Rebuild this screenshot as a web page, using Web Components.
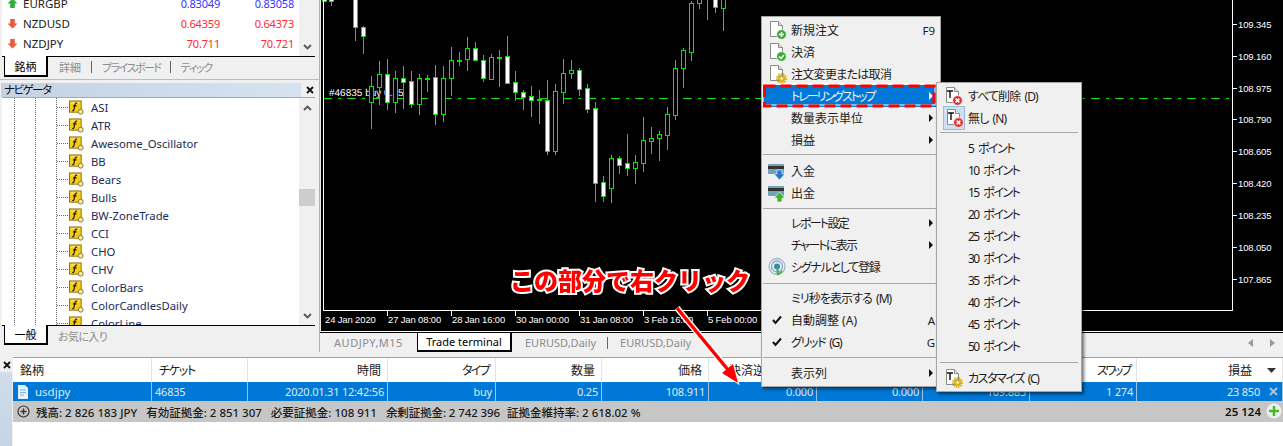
<!DOCTYPE html>
<html lang="ja"><head><meta charset="utf-8"><title>MT4</title>
<style>html,body{margin:0;padding:0;width:1283px;height:446px;overflow:hidden;background:#f0f0f0}</style>
</head><body>
<mt-app></mt-app>
<script>
const FONT='"Noto Sans","Noto Sans CJK JP",sans-serif';
const doc=(inner,t)=>`<svg width="20" height="20" viewBox="0 0 20 20"><path d="M3.5 1.5h8l4 4v11h-12z" fill="#fff" stroke="#8a8a8a"/><path d="M11.5 1.5v4h4" fill="#e4e4e4" stroke="#8a8a8a"/>${t?'<path d="M4 5h6M7 5v7" stroke="#111" stroke-width="1.4" fill="none"/>':''}${inner}</svg>`;
const badge=(c,m)=>`<circle cx="14.5" cy="14.5" r="4.8" fill="${c}" stroke="#fff" stroke-width=".6"/>${m}`;
const gear=`<circle cx="14.5" cy="14.5" r="4.6" fill="none" stroke="#d8a800" stroke-width="1.6" stroke-dasharray="1.6 .9"/><circle cx="14.5" cy="14.5" r="3.2" fill="#e8bd20" stroke="#a88000" stroke-width=".6"/><circle cx="14.5" cy="14.5" r="1.2" fill="#fff6c0"/>`;
const plus=badge('#39a93a','<path d="M12 14.5h5M14.5 12v5" stroke="#fff" stroke-width="1.6"/>');
const chk=badge('#39a93a','<path d="M12.2 14.5l1.8 1.9 3-3.4" stroke="#fff" stroke-width="1.5" fill="none"/>');
const xx=badge('#dc2f2f','<path d="M12.6 12.6l3.8 3.8M16.4 12.6l-3.8 3.8" stroke="#fff" stroke-width="1.5"/>');
const card=(c,d)=>`<svg width="20" height="20" viewBox="0 0 20 20"><rect x="1" y="3" width="16" height="10" rx="1" fill="#6fa3b8"/><rect x="1" y="5" width="16" height="3" fill="#333"/><path d="${d}" fill="${c}" stroke="#fff" stroke-width=".6"/></svg>`;
const ICONS={
 'doc-plus':doc(plus),'doc-check':doc(chk),'doc-gear':doc(gear),
 'tdoc-x':doc(xx,1),'tdoc-gear':doc(gear,1),
 'card-in':card('#2477d6','M10 9h5v4h3l-5.5 6-5.5-6h3z'),
 'card-out':card('#3fb52e','M12.500 9l5.500 6h-3v4h-5v-4h-3z'),
 'signal':`<svg width="20" height="20" viewBox="0 0 20 20"><g fill="none" stroke-width="1.3"><circle cx="10" cy="9.500" r="8" stroke="#9fb6c8"/><circle cx="10" cy="9.500" r="5.500" stroke="#7fa6c8"/></g><circle cx="10" cy="9.500" r="3" fill="#2e86c8"/><path d="M9 9h2l1 9h-2z" fill="#3cae3c"/><path d="M15 14a8 8 0 0 1-5 3.500" stroke="#3cae3c" stroke-width="1.500" fill="none"/></svg>`,
 'check':`<svg width="14" height="14" viewBox="0 0 14 14"><path d="M3 7l2.500 3L11 3.500" stroke="#111" stroke-width="2" fill="none"/></svg>`,
 'fn':`<svg width="16" height="17" viewBox="0 0 16 17"><rect x=".5" y="1.500" width="12.500" height="12" fill="#f7cc14" stroke="#8f6f08"/><path d="M2 3h9.500v1.200H2z" fill="#fde98a"/><path d="M8.800 4c-1.300-.5-2.100.1-2.400 1.400L5.300 10.500c-.3 1.300-.9 1.700-1.900 1.300M4.200 6.800h3.800" stroke="#1a1a1a" stroke-width="1.300" fill="none"/><circle cx="12.500" cy="13" r="2.600" fill="#f8ea9a" stroke="#7f7430"/></svg>`,
 'up':`<svg width="11" height="11" viewBox="0 0 11 11"><path d="M5.500 .5L10.500 5.500H7.800V10H3.200V5.500H.5z" fill="#2fb02f"/></svg>`,
 'down':`<svg width="11" height="11" viewBox="0 0 11 11"><path d="M5.500 10.500L.5 5.500H3.200V1H7.800V5.500H10.500z" fill="#f0583a"/></svg>`,
 'chev-up':`<svg width="9" height="6" viewBox="0 0 9 6"><path d="M1 5l3.500-3.500L8 5" stroke="#555" stroke-width="1.800" fill="none"/></svg>`,
 'chev-down':`<svg width="9" height="6" viewBox="0 0 9 6"><path d="M1 1l3.500 3.500L8 1" stroke="#555" stroke-width="1.800" fill="none"/></svg>`,
 'close':`<svg width="8" height="8" viewBox="0 0 8 8"><path d="M1 1l6 6M7 1L1 7" stroke="#111" stroke-width="1.800"/></svg>`,
 'row':`<svg width="12" height="16" viewBox="0 0 12 16"><path d="M1 1h7l3 3v11H1z" fill="#e6f2fc"/><path d="M3 6h6M3 8.500h6M3 11h4" stroke="#7fb4e0"/></svg>`,
 'sum':`<svg width="13" height="13" viewBox="0 0 13 13"><circle cx="6.500" cy="6.500" r="5.500" fill="none" stroke="#333" stroke-width="1.200"/><path d="M3.500 6.500h6M6.500 3.500v6" stroke="#333" stroke-width="1.400"/></svg>`,
 'green-plus':`<svg width="16" height="16" viewBox="0 0 16 16"><circle cx="8" cy="8" r="7.500" fill="#eee"/><path d="M3 8h10M8 3v10" stroke="#45b82a" stroke-width="2.400"/></svg>`,
 'row-x':`<svg width="9" height="9" viewBox="0 0 9 9"><path d="M1 1l7 7M8 1L1 8" stroke="#b4c0cc" stroke-width="2"/></svg>`,
 'tri-down':`<svg width="9" height="5" viewBox="0 0 9 5"><path d="M0 0h9L4.500 5z" fill="#333"/></svg>`,
 'left':`<svg width="5" height="8" viewBox="0 0 5 8"><path d="M5 0v8L0 4z" fill="#999"/></svg>`,
 'right':`<svg width="5" height="8" viewBox="0 0 5 8"><path d="M0 0v8l5-4z" fill="#999"/></svg>`,
};
class Base extends HTMLElement{
 connectedCallback(){ if(this.shadowRoot) return; this.attachShadow({mode:'open'}).innerHTML=this.render(); }
}
const def=(n,f)=>customElements.define(n,class extends Base{render(){return f(this)}});

def('mt-icon',e=>`<style>:host{display:inline-flex;align-items:center;justify-content:center;flex:none;line-height:0}</style>${ICONS[e.getAttribute('name')]||''}`);

def('mt-tab',e=>`<style>
:host{display:flex;align-items:center;justify-content:center;box-sizing:border-box;white-space:nowrap;font-size:var(--tab-size,11px);font-feature-settings:"palt";color:#8c8c8c;padding:0 10px;height:100%;position:relative}
:host([active]){background:#fff;color:#000;border:solid #000;border-width:0 2px 2px 1px;margin-top:-1px;height:calc(100% + 1px)}
:host([sep])::after{content:"";position:absolute;right:0;top:4px;height:12px;width:1px;background:#666}
</style><slot></slot>`);

def('mt-tabstrip',e=>`<style>
:host{display:flex;box-sizing:border-box;border-top:1px solid #000;background:#f0f0f0;padding-left:var(--tab-left,2px);height:var(--tab-h,20px);margin-right:var(--tab-right,4px)}
</style><slot></slot>`);

def('mt-quote',e=>{const c=e.getAttribute('dir')==='up'?'#3535ff':'#ff2a2a';return `<style>
:host{display:grid;grid-template-columns:16px 1fr 42px 32px 42px;align-items:center;height:20px;padding-left:5px;padding-right:5px;font-size:11.500px;color:#222}
span.v{color:${c};text-align:right;font-size:11px;letter-spacing:-.2px}
mt-icon{justify-self:start}
</style><mt-icon name="${e.getAttribute('dir')}"></mt-icon><span>${e.getAttribute('sym')}</span><span class="v">${e.getAttribute('bid')}</span><span></span><span class="v">${e.getAttribute('ask')}</span>`});

def('mt-scrollbar',e=>`<style>
:host{display:flex;flex-direction:column;align-items:center;background:#f0f0f0;width:16px;flex:none;position:relative;box-sizing:border-box;padding:var(--sb-pad,6px 0 6px)}
.sp{flex:1}
.th{position:absolute;left:0;right:0;top:${e.getAttribute('thumb')||0}px;height:17px;background:#cdcdcd;display:${e.hasAttribute('thumb')?'block':'none'}}
</style>${e.hasAttribute('noup')?'':'<mt-icon name="chev-up"></mt-icon>'}<div class="sp"></div><div class="th"></div><mt-icon name="chev-down"></mt-icon>`);

def('mt-market-watch',e=>`<style>
:host{display:block;height:80px;box-sizing:border-box;border-bottom:1px solid #bcbcbc;padding-left:2px;--tab-right:4px}
.body{display:flex;height:56px;overflow:hidden;background:#fff;margin-right:4px}
.list{flex:1;margin-top:-7px}
mt-tabstrip{--tab-h:21px}
mt-tab.a{width:44px;padding:0}
.k{letter-spacing:-1.500px}
.k2{letter-spacing:-1.200px}
</style>
<div class="body"><div class="list">
<mt-quote dir="up" sym="EURGBP" bid="0.83049" ask="0.83058"></mt-quote>
<mt-quote dir="down" sym="NZDUSD" bid="0.64359" ask="0.64373"></mt-quote>
<mt-quote dir="down" sym="NZDJPY" bid="70.711" ask="70.721"></mt-quote>
</div><mt-scrollbar noup style="--sb-pad:0 0 6px"></mt-scrollbar></div>
<mt-tabstrip><mt-tab class="a" active>銘柄</mt-tab><mt-tab sep style="padding:0 11px">詳細</mt-tab><mt-tab sep class="k">プライスボード</mt-tab><mt-tab class="k2">ティック</mt-tab></mt-tabstrip>`);

def('mt-nav-row',e=>`<style>
:host{display:flex;align-items:center;height:18px;padding-left:67px;gap:7px;font-size:11.300px;color:#1a2c58;white-space:nowrap;
background:
 repeating-linear-gradient(to bottom,#666 0 1px,transparent 1px 2px) 12px 0/1px 100% no-repeat,
 repeating-linear-gradient(to bottom,#666 0 1px,transparent 1px 2px) 33px 0/1px 100% no-repeat,
 repeating-linear-gradient(to bottom,#666 0 1px,transparent 1px 2px) 54px 0/1px 100% no-repeat,
 repeating-linear-gradient(to right,#666 0 1px,transparent 1px 2px) 55px 9px/12px 1px no-repeat}
mt-icon{margin-top:1px;width:15px}
</style><mt-icon name="fn"></mt-icon><span><slot></slot></span>`);

def('mt-navigator',e=>`<style>
:host{display:flex;flex-direction:column;height:272px;padding-top:3px;box-sizing:border-box;padding-left:1px}
.title{display:flex;align-items:center;height:14px;margin-right:0;flex:none}
.cap{flex:1;height:14px;line-height:14px;background:linear-gradient(to right,#c3d3e4,#d6e2f0);font-size:11.500px;font-feature-settings:"palt";letter-spacing:-1.500px;padding-left:3px;color:#111}
.x{width:18px;display:flex;justify-content:center}
.body{display:flex;flex:none;height:228px;background:#fff;border-top:1px solid #a8a8a8;margin-left:1px;margin-right:4px;overflow:hidden;box-sizing:border-box}
.tree{flex:1;overflow:hidden}
mt-scrollbar{--sb-pad:7px 0 6px}
mt-tabstrip{--tab-h:20px;margin-left:1px;flex:none}
mt-tab.a{width:44px;padding:0}
mt-tab.b{letter-spacing:-.6px}
</style>
<div class="title"><div class="cap">ナビゲータ</div><div class="x"><mt-icon name="close"></mt-icon></div></div>
<div class="body"><div class="tree">
${['ASI','ATR','Awesome_Oscillator','BB','Bears','Bulls','BW-ZoneTrade','CCI','CHO','CHV','ColorBars','ColorCandlesDaily','ColorLine'].map(t=>`<mt-nav-row>${t}</mt-nav-row>`).join('')}
</div><mt-scrollbar thumb="91"></mt-scrollbar></div>
<mt-tabstrip><mt-tab class="a" active>一般</mt-tab><mt-tab class="b">お気に入り</mt-tab></mt-tabstrip>`);

const C=[[324,-5,1,-5,1,'w'],[331,-5,6,-5,1,'w'],[355,-5,41,-5,27,'w'],[363,26,54,27,36,'w'],[371,76,129,86,102,'h'],[379,61,105,74,87,'h'],[387,59,110,74,102,'w'],[395,71,113,78,102,'h'],[403,66,109,78,82,'w'],[411,71,108,81,104,'w'],[419,74,115,78,104,'h'],[427,75,92,78,78,'d'],[435,65,125,77,114,'w'],[443,66,122,78,114,'h'],[451,47,96,60,78,'h'],[459,52,66,60,60,'d'],[467,37,71,48,59,'h'],[475,42,60,48,60,'w'],[483,55,82,60,78,'w'],[491,54,79,57,79,'h'],[499,50,87,57,57,'d'],[507,36,84,56,83,'w'],[515,71,101,82,92,'w'],[523,90,110,92,97,'w'],[531,86,117,96,100,'w'],[539,90,124,99,99,'d'],[547,80,155,100,151,'w'],[555,84,155,91,151,'h'],[563,59,104,73,92,'h'],[571,60,79,70,73,'h'],[579,68,96,70,89,'w'],[587,84,113,88,109,'w'],[595,102,202,108,183,'w'],[603,176,202,182,196,'w'],[611,155,203,158,188,'h'],[619,156,174,158,165,'w'],[627,134,176,163,168,'w'],[635,155,184,162,168,'h'],[643,117,172,140,163,'h'],[651,127,154,138,141,'h'],[659,131,161,134,138,'h'],[667,107,150,114,135,'h'],[675,60,120,68,115,'h'],[683,48,88,50,68,'h'],[691,1,61,3,52,'h'],[699,-5,9,-5,3,'h'],[707,-5,20,-5,-3,'d'],[715,-5,13,-5,7,'w'],[723,-5,31,-5,8,'h']];
const G='#0be00b';
const candles=C.map(([x,wt,wb,bt,bb,k])=>{
 let s=`<rect x="${x}" y="${wt}" width="1" height="${wb-wt}" fill="${G}"/>`;
 if(k==='d') s+=`<rect x="${x-2}" y="${bt}" width="5" height="2" fill="${G}"/>`;
 else s+=`<rect x="${x-1.5}" y="${bt+.5}" width="4" height="${bb-bt}" fill="${k==='w'?'#fff':'#000'}" stroke="${G}"/>`;
 return s}).join('');
const Y=[['109.345',24],['109.160',56],['108.975',88],['108.790',119],['108.605',151],['108.420',183],['108.235',215],['108.050',247],['107.865',279]];
const X=[['24 Jan 2020',324,0],['27 Jan 08:00',387,387],['28 Jan 16:00',451,451],['30 Jan 00:00',515,515],['31 Jan 08:00',579,579],['3 Feb 16:00',643,643],['5 Feb 00:00',707,707]];

def('mt-chart',e=>`<style>
:host{display:flex;flex-direction:column;height:352px;min-width:0}
svg{display:block;flex:none}
text{font-family:"Liberation Sans",sans-serif;font-size:9.500px;letter-spacing:-.15px;fill:#fff}
mt-tabstrip{--tab-h:19px;--tab-left:0;--tab-right:0;--tab-size:11px;border-top:none;flex:none;position:relative}
mt-tab.off{padding:0 12px}
mt-tab.act{width:95px;padding:0;border-top:1px solid #000;margin-left:0}
.arrows{position:absolute;right:8px;top:0;height:100%;display:flex;align-items:center;gap:17px}
.first{width:97px;padding:0;letter-spacing:.5px}
mt-tab.e1{padding:0 12px 0 13px}
</style>
<svg width="963" height="333" viewBox="320 0 963 333" shape-rendering="crispEdges">
<rect x="320" y="0" width="963" height="333" fill="#000"/>
<rect x="320" y="0" width="1" height="331" fill="#e8e8e8"/>
<line x1="324" x2="1232" y1="98.500" y2="98.500" stroke="${G}" stroke-dasharray="9 6 3 6" stroke-dashoffset="-23"/>
<text x="329" y="96" text-rendering="geometricPrecision" style="font-size:10px;letter-spacing:0">#46835 buy 0.25</text>
${candles}
<rect x="323" y="0" width="1" height="311" fill="#fff"/>
<rect x="323" y="310" width="910" height="1" fill="#fff"/>
<rect x="1232" y="0" width="1" height="311" fill="#fff"/>
${Y.map(([t,y])=>`<rect x="1233" y="${y}" width="4" height="1" fill="#fff"/><text x="1238" y="${y+4}">${t}</text>`).join('')}
${X.map(([t,x,k])=>`${k?`<rect x="${k}" y="311" width="1" height="5" fill="#fff"/>`:''}<text x="${x+1}" y="323">${t}</text>`).join('')}
<rect x="320" y="331" width="963" height="1" fill="#fff"/>
</svg>
<mt-tabstrip>
<mt-tab class="off first">AUDJPY,M15</mt-tab><mt-tab class="act" active>Trade terminal</mt-tab>
<mt-tab class="off e1" sep>EURUSD,Daily</mt-tab><mt-tab class="off">EURUSD,Daily</mt-tab>
<div class="arrows"><mt-icon name="left"></mt-icon><mt-icon name="right"></mt-icon></div>
</mt-tabstrip>`);

const COLS='139px 96px 140px 108px 106px 107px 108px 106px 107px 107px 146px';
def('mt-terminal',e=>{
 const H=[['銘柄','l'],['チケット','l','letter-spacing:-1.200px'],['時間',''],['タイプ','','letter-spacing:-1.700px'],['数量',''],['価格',''],['決済逆指値','','padding-right:27px'],['',''],['',''],['スワップ','','letter-spacing:-2.200px'],['損益','','padding-right:30px']];
 const R=[['usdjpy','l'],['46835','l'],['2020.01.31 12:42:56',''],['buy',''],['0.25',''],['108.911',''],['0.000',''],['0.000',''],['109.885',''],['1 274',''],['23 850','','padding-right:22px']];
 return `<style>
:host{display:grid;grid-template-columns:13px 1fr;height:94px;background:#f0f0f0;padding-top:5px;box-sizing:border-box;font-size:11.500px}
.strip{display:flex;flex-direction:column;align-items:center;margin-top:1px}
.strip .x{height:13px;display:flex;align-items:center}
.strip .b{flex:1;align-self:stretch;background:linear-gradient(to bottom,#f0f0f0 0,#cfdcea 2px,#c5d5e6);margin-right:1px;margin-top:0}
.main{background:#fff;display:flex;flex-direction:column;border-top:1px solid #a0a0a0;min-width:0}
.g{display:grid;grid-template-columns:${COLS};position:relative}
.hd{height:24px;font-size:12px;font-feature-settings:"palt";color:#222}
.hd div{display:flex;align-items:center;justify-content:flex-end;padding-right:6px;border-right:1px solid #e4e4e4;box-sizing:border-box;white-space:nowrap}
.hd div.l{justify-content:flex-start;padding-left:7px}
.rw{height:19px;background:#0078d7;color:#dcebf8;font-size:11px;letter-spacing:-.2px}
.rw div{display:flex;align-items:center;justify-content:flex-end;padding-right:3px;border-right:1px solid #9cc4e6;box-sizing:border-box;white-space:nowrap}
.rw div.l{justify-content:flex-start;padding-left:3px}
.rw div:first-child{padding-left:4px;gap:6px;font-size:11.500px;letter-spacing:0}
.rw div:last-child,.hd div:last-child{border-right:0}
.tri{position:absolute;right:7px;top:10px}
.rx{position:absolute;right:5px;top:5px}
.st{height:21px;background:#c6c6c6;display:flex;align-items:center;padding-left:4px;color:#1a1a1a;font-weight:500;position:relative;white-space:nowrap;font-feature-settings:"palt"}
.st mt-icon{margin-right:6px}
.st span{margin-right:9px}
.st span.n{margin-right:7px;letter-spacing:-.1px}
.tot{position:absolute;right:22px;top:3px;font-weight:600;color:#111}
.gp{position:absolute;right:1px;top:2px;margin:0!important}
</style>
<div class="strip"><div class="x"><mt-icon name="close"></mt-icon></div><div class="b"></div></div>
<div class="main">
<div class="g hd">${H.map(([t,c,s])=>`<div class="${c}" style="${s||''}">${t}</div>`).join('')}<mt-icon class="tri" name="tri-down"></mt-icon></div>
<div class="g rw">${R.map(([t,c,s],i)=>`<div class="${c}" style="${s||''}">${i===0?'<mt-icon name="row"></mt-icon>':''}${t}</div>`).join('')}<mt-icon class="rx" name="row-x"></mt-icon></div>
<div class="st"><mt-icon name="sum"></mt-icon><span>残高: 2 826 183 JPY</span><span>有効証拠金: 2 851 307</span><span>必要証拠金: 108 911</span><span class="n">余剰証拠金: 2 742 396</span><span>証拠金維持率: 2 618.02 %</span><div class="tot">25 124</div><mt-icon class="gp" name="green-plus"></mt-icon></div>
</div>`});

def('mt-sep',e=>`<style>
:host{display:block;box-sizing:border-box;height:${e.getAttribute('h')||9}px;padding-top:${e.getAttribute('t')||4}px;padding-left:${e.getAttribute('l')||0}px;padding-right:3px}
div{height:1px;background:#a8a8a8}
</style><div></div>`);

def('mt-item',e=>{const ic=e.getAttribute('icon'),k=e.getAttribute('key'),a=e.hasAttribute('arrow'),sel=e.hasAttribute('sel');
 return `<style>
:host{display:flex;align-items:center;height:22px;font-size:12px;color:#1c1c1c;font-feature-settings:"palt";white-space:nowrap;box-sizing:border-box;position:relative}
:host([sel]){background:#0078d7;color:#e8f2fb;margin-right:4px}
.ic{width:var(--ic,28px);display:flex;justify-content:center;flex:none;box-sizing:border-box;padding-left:var(--icl,0)}
.box{display:flex;background:#cde0f0;outline:1px solid #9cbbd6;padding:1px 0;margin-left:1px}
.tx{flex:1}
.k{padding-right:5px;font-family:"Noto Sans",sans-serif;font-size:11.500px;letter-spacing:0}
.a{width:0;height:0;border-left:4px solid ${sel?'#fff':'#111'};border-top:4px solid transparent;border-bottom:4px solid transparent;position:absolute;right:${sel?3:7}px;top:7px}
</style>
<div class="ic">${ic?(e.hasAttribute('box')?`<div class="box"><mt-icon name="${ic}"></mt-icon></div>`:`<mt-icon name="${ic}"></mt-icon>`):''}</div><div class="tx"><slot></slot></div>${k?`<div class="k">${k}</div>`:''}${a?'<i class="a"></i>':''}`});

def('mt-menu',e=>`<style>
:host{display:block;position:absolute;left:${e.getAttribute('x')}px;top:${e.getAttribute('y')}px;width:${e.getAttribute('w')}px;box-sizing:border-box;background:#f0f0f0;border:1px solid #a6a6a6;padding:2px 0 2px 1px;box-shadow:2px 2px 3px rgba(0,0,0,.55);z-index:${e.getAttribute('z')}}
</style><slot></slot>`);

def('mt-callout',e=>`<style>
:host{display:block;position:absolute;left:0;top:0;width:0;height:0;z-index:3}
.t{position:absolute;left:510px;top:264px;font:900 24px/32px "Noto Sans CJK JP",sans-serif;color:#f00;white-space:nowrap;-webkit-text-stroke:4px #fff;paint-order:stroke fill;filter:drop-shadow(1px 1px 1px rgba(0,0,0,.4))}
svg{position:absolute;left:0;top:0}
</style>
<svg width="1283" height="446" viewBox="0 0 1283 446">
<path d="M677 308L731 373" stroke="#fff" stroke-width="6" fill="none"/>
<path d="M738 383L722 373L733 364z" fill="#f00" stroke="#fff" stroke-width="2"/>
<path d="M677 308L729 371" stroke="#f00" stroke-width="3.500" fill="none"/>
<path d="M738 383L722 373L733 364z" fill="#f00"/>
<rect x="763" y="85" width="172" height="21" fill="none" stroke="#fff" stroke-width="1" transform="translate(0 -1)"/>
<rect x="764.500" y="86" width="169.500" height="20" fill="none" stroke="#f00" stroke-width="3" stroke-dasharray="11 5"/>
</svg>
<div class="t">この部分で右クリック</div>`);

def('mt-app',e=>`<style>
:host{display:grid;grid-template-columns:320px 1fr;grid-template-rows:352px 94px;width:1283px;height:446px;position:relative;overflow:hidden;background:#f0f0f0;font-family:${FONT};font-size:11.500px;color:#111}
.left{border-right:1px solid #b0b0b0;box-sizing:border-box;height:352px;overflow:hidden}
mt-terminal{grid-column:1/3}
.pts{--ic:30px}
</style>
<div class="left"><mt-market-watch></mt-market-watch><mt-navigator></mt-navigator></div>
<mt-chart></mt-chart>
<mt-terminal></mt-terminal>
<mt-menu x="761" y="16" w="180" z="1">
<mt-item icon="doc-plus" key="F9">新規注文</mt-item>
<mt-item icon="doc-check">決済</mt-item>
<mt-item icon="doc-gear" style="letter-spacing:-.7px">注文変更または取消</mt-item>
<mt-item sel arrow style="letter-spacing:-2px">トレーリングストップ</mt-item>
<mt-item arrow>数量表示単位</mt-item>
<mt-item arrow>損益</mt-item>
<mt-sep t="3"></mt-sep>
<mt-item icon="card-in">入金</mt-item>
<mt-item icon="card-out">出金</mt-item>
<mt-sep h="8"></mt-sep>
<mt-item arrow style="letter-spacing:-1.700px">レポート設定</mt-item>
<mt-item arrow style="letter-spacing:-1.700px">チャートに表示</mt-item>
<mt-item icon="signal" style="letter-spacing:-1.300px">シグナルとして登録</mt-item>
<mt-sep t="5"></mt-sep>
<mt-item style="letter-spacing:-.95px;word-spacing:2px">ミリ秒を表示する (M)</mt-item>
<mt-item icon="check" key="A">自動調整 (A)</mt-item>
<mt-item icon="check" key="G" style="letter-spacing:-1.300px;word-spacing:2px">グリッド (G)</mt-item>
<mt-sep></mt-sep>
<mt-item arrow>表示列</mt-item>
</mt-menu>
<mt-menu class="pts" x="936" y="82" w="146" z="2" style="letter-spacing:-.9px;word-spacing:2px">
<mt-item icon="tdoc-x">すべて削除 (D)</mt-item>
<mt-item icon="tdoc-x" box>無し (N)</mt-item>
<mt-sep h="8" t="3" l="2"></mt-sep>
${[5,10,15,20,25,30,35,40,45,50].map(n=>`<mt-item style="letter-spacing:-1.500px;word-spacing:3px">${n} ポイント</mt-item>`).join('')}
<mt-sep h="10" t="5" l="2"></mt-sep>
<mt-item icon="tdoc-gear" style="letter-spacing:-1.400px">カスタマイズ (C)</mt-item>
</mt-menu>
<mt-callout></mt-callout>`);
</script>
</body></html>
